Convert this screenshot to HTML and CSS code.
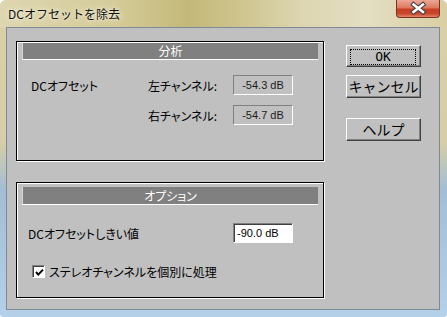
FILE: index.html
```html
<html>
<head>
<meta http-equiv="content-type" content="text/html; charset=utf-8">
<link rel="stylesheet" href="styles.css">
<title>DCオフセットを除去</title>
</head>
<body>
<div class=window>
<div class=titlebar>
<span class=title>DCオフセットを除去</span>
<div class=close><svg width=44 height=18 viewBox="0 0 44 18"><path d="M17.5 5.5L27 13M27 5.5L17.5 13" stroke="#3c3c44" stroke-width="4.6" stroke-linecap="square" fill="none"/><path d="M17.5 5.5L27 13M27 5.5L17.5 13" stroke="#ffffff" stroke-width="2.6" stroke-linecap="square" fill="none"/></svg></div>
</div>
<div class=client>
<div class=groups>
<div class="group analysis">
<div class=ghead>分析</div>
<div class=readings>
<span class=lbl>DCオフセット</span><span class=lbl>左チャンネル:</span><span class=val>-54.3 dB</span>
<span></span><span class=lbl>右チャンネル:</span><span class=val>-54.7 dB</span>
</div>
</div>
<div class="group options">
<div class=ghead>オプション</div>
<div class=orow>
<span class="lbl thr">DCオフセットしきい値</span><span class=field>-90.0 dB</span>
</div>
<div class=crow>
<span class=check><svg width=11 height=11 viewBox="0 0 11 11"><path d="M2 5L4.3 7.6L9 2.6" stroke="#000" stroke-width="2" fill="none"/></svg></span><span class=lbl>ステレオチャンネルを個別に処理</span>
</div>
</div>
</div>
<div class=buttons>
<div class="btn ok"><span class=focus>OK</span></div>
<div class=btn>キャンセル</div>
<div class="btn help">ヘルプ</div>
</div>
</div>
</div>
</body>
</html>
```
FILE: styles.css
```css
html,body{margin:0;padding:0}
body{font-family:"Noto Sans CJK JP","Liberation Sans",sans-serif;font-size:12px;color:#000}
.window{width:447px;height:317px;box-sizing:border-box;overflow:hidden;border-radius:6px 6px 3px 3px;
background:linear-gradient(180deg,#d9d1a5 0%,#d5cea8 45%,#a3bdd4 60%,#b4d1e9 100%)}
.titlebar{height:28px;display:flex;align-items:flex-start;
background:linear-gradient(90deg,#ddd6b0 0%,#d5cc9a 25%,#c4b879 42%,#cdc28a 52%,#ddd6b2 68%,#e4dec3 82%,#d8cfa3 100%)}
.title{padding:5px 0 0 8px;font-size:12px;line-height:18px;color:#101010;text-shadow:0 0 6px #f4f0de,0 0 3px #f4f0de}
.close{margin-left:auto;margin-right:7px;width:44px;height:18px;box-sizing:border-box;border:1px solid #7b3222;border-top:0;
border-radius:0 0 4px 4px;background:linear-gradient(180deg,#eca896 0%,#de7a5e 45%,#c93f24 55%,#c9462a 80%,#e2876a 100%)}
.close svg{display:block;margin:-1px 0 0 -1px}
.client{height:281px;margin:0 8px 0 7px;background:#c0c0c0;display:flex;align-items:flex-start;
padding:13px 0 0 9px;box-sizing:border-box;box-shadow:0 0 0 1px #808a94}
.groups{display:flex;flex-direction:column;gap:21px;width:308px}
.group{border:1px solid #000;box-shadow:1px 1px 0 #fff,inset 1px 1px 0 #fff;box-sizing:border-box}
.analysis{height:120px}
.options{height:116px}
.lbl{font-feature-settings:"palt";white-space:nowrap}
.ghead{margin:1px 5px 0;height:16px;line-height:16px;background:#808080;color:#fff;text-align:center;
border-bottom:1px solid #fff;border-left:1px solid #d8d8d8;font-feature-settings:"palt"}
.options .ghead{margin-top:4px;height:17px;line-height:17px}
.readings{display:grid;grid-template-columns:117px 85px 60px;grid-auto-rows:20px;row-gap:10px;
margin:15px 0 0 14px;align-items:center}
.val{height:20px;box-sizing:border-box;border:1px solid;border-color:#808080 #fff #fff #808080;
font-family:"Liberation Sans",sans-serif;font-size:11px;line-height:18px;text-align:center;color:#1c1c1c}
.orow{display:flex;align-items:center;margin:18px 0 0 11px}
.thr{width:205px}
.field{width:60px;height:20px;box-sizing:border-box;background:#fff;border:1px solid;border-color:#808080 #fff #fff #808080;
box-shadow:inset 1px 1px 0 #404040;padding-left:3px;font-family:"Liberation Sans",sans-serif;font-size:11px;line-height:18px;color:#000}
.crow{display:flex;align-items:center;gap:4px;margin:20px 0 0 15px}
.check{width:13px;height:13px;box-sizing:border-box;background:#fff;border:1px solid;border-color:#808080 #fff #fff #808080;
box-shadow:inset 1px 1px 0 #404040}
.check svg{display:block;margin:1px 0 0 1px}
.buttons{display:flex;flex-direction:column;margin:4px 0 0 22px;width:75px}
.btn{height:23px;box-sizing:border-box;border:1px solid;border-color:#fff #404040 #404040 #fff;
box-shadow:inset -1px -1px 0 #808080;background:#c0c0c0;text-align:center;font-size:14px;line-height:20px;margin-top:8px}
.ok{height:22px;margin-top:0;padding:3px 4px 4px 3px;font-family:"DejaVu Sans Mono",monospace;font-size:13px;line-height:14px}
.focus{display:block;border:1px dotted #000;height:14px;line-height:14px}
.help{margin-top:20px}
```
